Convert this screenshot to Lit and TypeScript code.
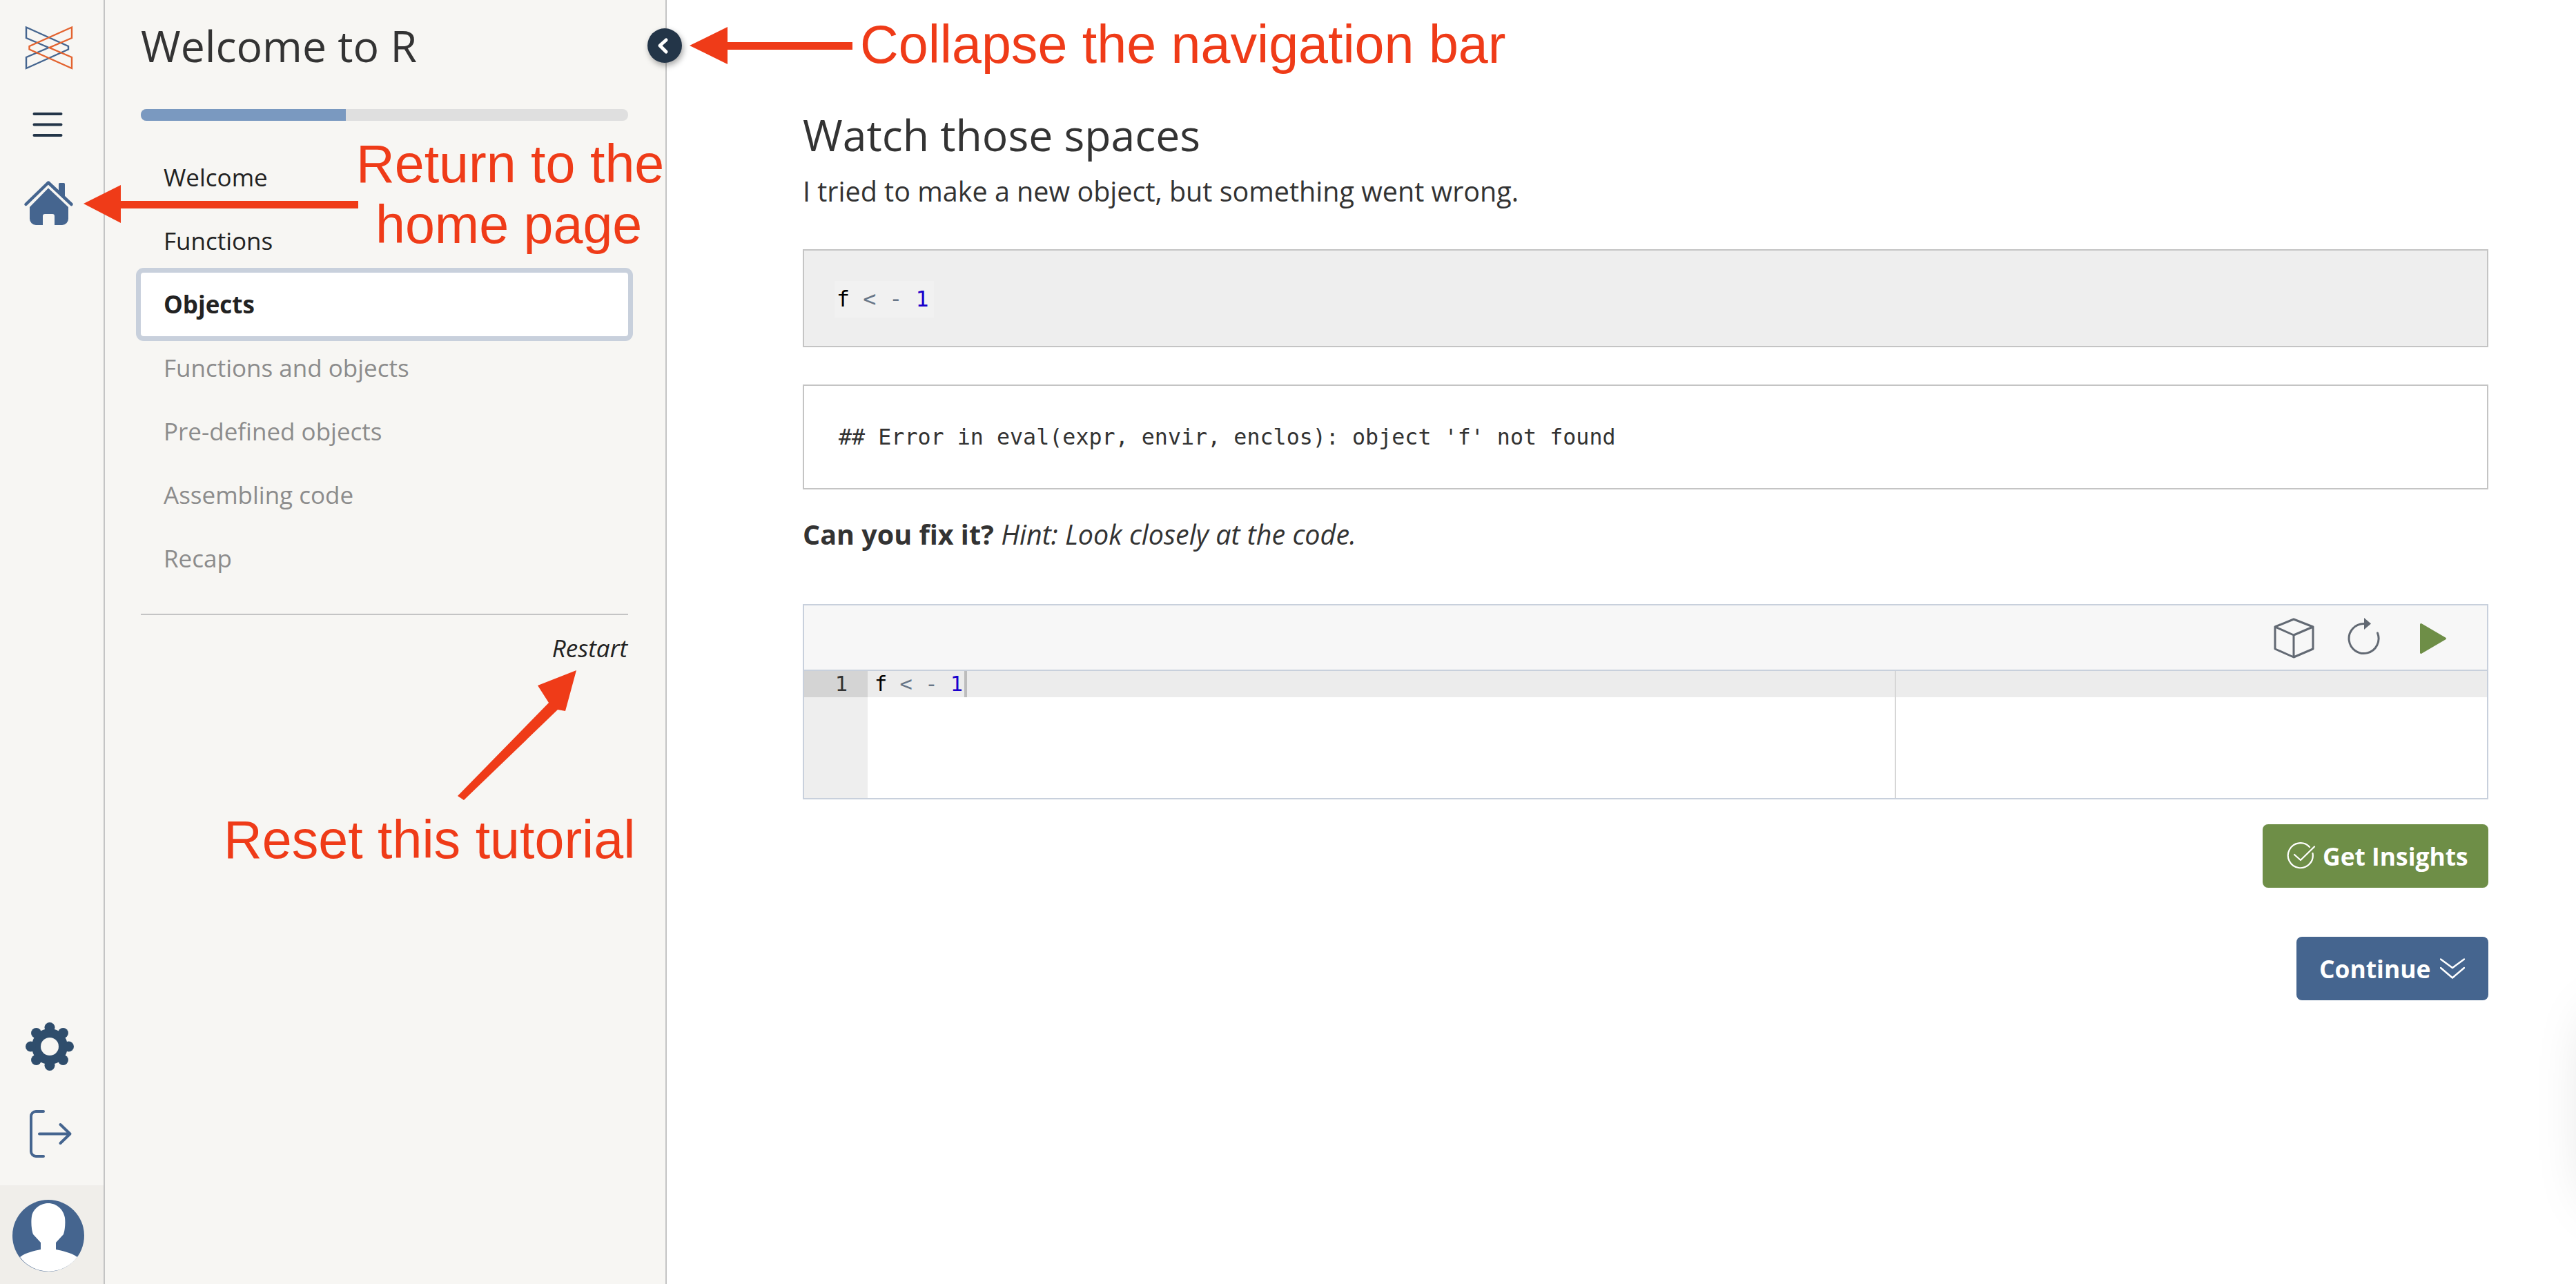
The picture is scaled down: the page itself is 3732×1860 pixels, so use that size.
import { LitElement, html, css, svg } from "lit";
import { customElement } from "lit/decorators.js";

const NAV = [
  { label: "Welcome", state: "done" },
  { label: "Functions", state: "done" },
  { label: "Objects", state: "active" },
  { label: "Functions and objects", state: "todo" },
  { label: "Pre-defined objects", state: "todo" },
  { label: "Assembling code", state: "todo" },
  { label: "Recap", state: "todo" },
];
const LOBES = [0, 45, 90, 135, 180, 225, 270, 315].map((a) => ({
  x: 72 + 27.5 * Math.cos((a * Math.PI) / 180),
  y: 1516 + 27.5 * Math.sin((a * Math.PI) / 180),
}));
function svgCircle(x: number, y: number) {
  return svg`<circle cx=${x} cy=${y} r="7.500" fill="#2f4d6c"/>`;
}

@customElement("app-root")
export class AppRoot extends LitElement {
  static styles = css`
    :host { display: block; position: relative; width: 100%; height: 100vh; overflow: hidden; background: #fff;
      font-family: "Open Sans", sans-serif; color: #333; }
    .page { display: flex; height: 100%; }
    svg { display: block; flex: none; }
    .rail { width: 150px; flex: none; display: flex; flex-direction: column; background: #f7f6f3; border-right: 2px solid #c4c4c4; }
    .logo { width: 70px; height: 64px; margin: 37px 0 0 36px; }
    .burger { width: 46px; height: 39px; margin: 60px 0 0 46px; }
    .home { width: 74px; height: 70px; margin: 60px 0 0 34px; }
    .gear { width: 76px; height: 76px; margin: auto 0 0 34px; }
    .logout { width: 66px; height: 77px; margin: 50px 0 0 40px; }
    .me { height: 143px; margin-top: 36px; background: #f0eeea; padding: 21px 0 0 18px; box-sizing: border-box; }
    .avatar { width: 104px; height: 104px; }

    .side { flex: none; padding: 0 54px 0 52px; background: #f7f6f3; border-right: 2px solid #c4c4c4; position: relative; box-sizing: content-box; width: 706px; }
    .title { margin: 0; padding-top: 24px; height: 158px; box-sizing: border-box; font-size: 62.500px; line-height: 84px; font-weight: 400; color: #333; }
    .track { height: 17px; border-radius: 8px; background: #dfdfdf; overflow: hidden; }
    .fill { height: 100%; background: #7a99c0; }
    .nav { margin-top: 36px; }
    .item { height: 92px; line-height: 92px; padding-left: 33px; font-size: 35px; color: #222; border-radius: 4px; }
    .item.todo { color: #8c8c8c; }
    .item.active { background: #fff; font-weight: 700; outline: 7px solid #c8d0dc; }
    .rule { height: 2px; background: #c4c4c4; margin-top: 34px; }
    .restart { text-align: right; font-style: italic; font-size: 35px; line-height: 48px; margin-top: 24px; color: #222; padding-right: 1px; }
    .collapse { position: absolute; left: 786px; top: 41px; width: 50px; height: 50px; border-radius: 50%; background: #233548;
      box-shadow: 2px 4px 8px rgba(0,0,0,.35); }

    .main { flex: 1; min-width: 0; padding: 150px 127px 0 197px; }
    h2 { margin: 0; font-size: 62.500px; font-weight: 400; line-height: 90px; color: #333; }
    .text { margin: 7px 0 0; font-size: 39.500px; line-height: 60px; }
    .code { box-sizing: border-box; border: 2px solid #c4c4c4; font-family: "DejaVu Sans Mono", monospace; font-size: 31.700px; display: flex; align-items: center; }
    .source { height: 142px; margin-top: 54px; background: #eee; padding-left: 44px; }
    .source .chip { background: #f1f1f1; padding: 0 7px 0 3px; margin-top: 2px; line-height: 53px; height: 53px; color: #000; white-space: pre; }
    .op { color: #687687; }
    .num { color: #1a00cc; }
    .output { height: 152px; margin-top: 54px; background: #fff; color: #333; padding-left: 50px; }
    .ask { margin: 35px 0 0; font-size: 39.500px; line-height: 60px; }
    .editor { position: relative; height: 283px; margin-top: 71px; box-sizing: border-box; border: 2px solid #c8d0dc; display: flex; flex-direction: column; }
    .tools { height: 93px; flex: none; display: flex; justify-content: flex-end; background: #f7f7f7; border-bottom: 2px solid #c8d0dc; padding-right: 56px; }
    .tools svg { height: 93px; }
    .cube { width: 61px; }
    .reload { width: 50px; margin-left: 45px; }
    .play { width: 44px; margin-left: 54px; }
    .body { flex: 1; display: flex; font-family: "DejaVu Sans Mono", monospace; font-size: 30.400px; line-height: 38px; }
    .gutter { width: 92px; flex: none; background: #eee; color: #333; }
    .gline { background: #d4d4d4; text-align: right; padding-right: 29px; height: 38px; }
    .lines { flex: 1; }
    .line { background: #ececec; height: 38px; padding-left: 10px; color: #000; display: flex; }
    .src { white-space: pre; }
    .cursor { width: 4px; height: 38px; background: #bdbdbd; margin-left: 2px; }
    .margin { position: absolute; left: 1580px; top: 95px; bottom: 0; width: 2px; background: #d6d6d6; }
    .actions { display: flex; flex-direction: column; align-items: flex-end; gap: 71px; margin-top: 36px; }
    .btn { height: 92px; border-radius: 8px; color: #fff; font-weight: 700; font-size: 35.400px; display: flex; align-items: center; box-sizing: border-box; }
    .insights { width: 327px; background: #6e8e47; padding-left: 35px; gap: 10px; }
    .continue { width: 278px; background: #45658f; padding-left: 33px; gap: 14px; }
    .check { width: 42px; height: 40px; }
    .chev { width: 36px; height: 30px; }

    .overlay { position: absolute; left: 0; top: 0; width: 3732px; height: 1860px; pointer-events: none; }
    .note { position: absolute; font-family: "Liberation Sans", Arial, sans-serif; font-size: 77.200px; line-height: 88px; color: #ef3b18; white-space: nowrap; }
    .n1 { left: 1246px; top: 20px; }
    .n2 { left: 516px; top: 193px; }
    .n3 { left: 544px; top: 281px; }
    .n4 { left: 324px; top: 1172px; }
    .glow { position: absolute; left: 3770px; top: 1480px; width: 200px; height: 250px; box-shadow: 0 0 90px rgba(0,0,0,.22); background: #fff; }
  `;

  render() {
    return html`
      <div class="page">
        <div class="rail">
          <svg class="logo" viewBox="36 37 70 64" fill="none" stroke-width="2.400" stroke-linejoin="miter">
            <path stroke="#45658f" d="M38 39.500 99 67v4.500L38 99V83l32.500-14L38 55z"/>
            <path stroke="#e3632f" d="M104 39.500 42.500 67v4.500L104 99V83L71.500 69 104 55z"/>
          </svg>
          <svg class="burger" viewBox="46 161 46 39" fill="none" stroke="#233548" stroke-width="4" stroke-linecap="round">
            <path d="M49.500 165H88.500M49.500 180.500H88.500M49.500 196H88.500"/>
          </svg>
          <svg class="home" viewBox="34 260 74 70">
            <path fill="none" stroke="#45658f" stroke-width="4.500" stroke-linecap="round" stroke-linejoin="round" d="M37.500 296 70 264.500 103.500 296"/>
            <path fill="#45658f" d="M85 266.500a1.500 1.500 0 0 1 1.500-1.500h6a1.500 1.500 0 0 1 1.500 1.500V286l-9-8.500z"/>
            <path fill="#45658f" d="M70 272.500 99 300v17a9 9 0 0 1-9 9H79v-13a3 3 0 0 0-3-3H65a3 3 0 0 0-3 3v13H52a9 9 0 0 1-9-9V300z"/>
          </svg>
          <svg class="gear" viewBox="34 1478 76 76">
            <circle cx="72" cy="1516" r="26" fill="#2f4d6c"/>
            ${LOBES.map((p) => svgCircle(p.x, p.y))}
            <circle cx="72" cy="1516" r="13" fill="#f7f6f3"/>
          </svg>
          <svg class="logout" viewBox="40 1604 66 77" fill="none" stroke="#45658f" stroke-width="4" stroke-linecap="round" stroke-linejoin="round">
            <path d="M63 1610H52a7 7 0 0 0-7 7v51a7 7 0 0 0 7 7h11"/>
            <path d="M57 1642.500H101M87.500 1629 101.500 1642.500 87.500 1656"/>
          </svg>
          <div class="me">
            <svg class="avatar" viewBox="0 0 104 104">
              <circle cx="52" cy="52" r="52" fill="#45658f"/>
              <path fill="#fff" d="M41 72V62L30 50C27 42 27 30 28 24 30 12 42 5 52 5 64 5 74 14 76 26 77 34 76 44 74 50L63 62V72C72 74 84 76 94 83A52 52 0 0 1 11 83C20 76 32 74 41 72Z"/>
            </svg>
          </div>
        </div>

        <div class="side">
          <h1 class="title">Welcome to R</h1>
          <div class="track"><div class="fill" style="width:${(297 / 706) * 100}%"></div></div>
          <div class="nav">
            ${NAV.map((n) => html`<div class="item ${n.state}">${n.label}</div>`)}
          </div>
          <div class="rule"></div>
          <div class="restart">Restart</div>
          <div class="collapse">
            <svg width="50" height="50" viewBox="0 0 50 50" fill="none" stroke="#fff" stroke-width="5" stroke-linecap="round" stroke-linejoin="round">
              <path d="M27 17 18 25 27 34"/>
            </svg>
          </div>
        </div>

        <div class="main">
          <h2>Watch those spaces</h2>
          <p class="text">I tried to make a new object, but something went wrong.</p>
          <div class="code source"><span class="chip">f <span class="op">&lt;</span> <span class="op">-</span> <span class="num">1</span></span></div>
          <div class="code output">## Error in eval(expr, envir, enclos): object 'f' not found</div>
          <p class="ask"><b>Can you fix it?</b> <i>Hint: Look closely at the code.</i></p>
          <div class="editor">
            <div class="tools">
              <svg class="cube" viewBox="3294 877 61 93" fill="none" stroke="#626973" stroke-width="3" stroke-linejoin="round">
                <path d="M3324 897 3352 908V940L3324 952 3297 940V908ZM3297 908 3324 920 3352 908M3324 920V952"/>
              </svg>
              <svg class="reload" viewBox="3400 877 50 93">
                <path fill="none" stroke="#626973" stroke-width="3" stroke-linecap="round" d="M3445.500 917A21.500 21.500 0 1 1 3426 903.500"/>
                <path fill="#626973" d="M3426 895 3436 903.500 3426 912Z"/>
              </svg>
              <svg class="play" viewBox="3504 877 44 93">
                <path fill="#6e8e47" stroke="#6e8e47" stroke-width="3" stroke-linejoin="round" d="M3508.500 904.500 3543.500 925 3508.500 945.500Z"/>
              </svg>
            </div>
            <div class="body">
              <div class="gutter"><div class="gline">1</div></div>
              <div class="lines">
                <div class="line"><span class="src">f <span class="op">&lt;</span> <span class="op">-</span> <span class="num">1</span></span><span class="cursor"></span></div>
              </div>
            </div>
            <div class="margin"></div>
          </div>
          <div class="actions">
            <div class="btn insights">
              <svg class="check" viewBox="3312 1222 42 40" fill="none" stroke="#fff" stroke-width="2.200" stroke-linecap="round" stroke-linejoin="round">
                <path d="M3345 1229A18 18 0 1 0 3349.500 1238"/>
                <path d="M3323 1240 3332 1248 3352 1228.500"/>
              </svg>
              <span>Get Insights</span>
            </div>
            <div class="btn continue">
              <span>Continue</span>
              <svg class="chev" viewBox="0 0 36 30" fill="none" stroke="#fff" stroke-width="2.500" stroke-linecap="round" stroke-linejoin="round">
                <path d="M1 1.500 18 14 35 1.500M1 14 18 28.500 35 14"/>
              </svg>
            </div>
          </div>
        </div>
      </div>

      <div class="glow"></div>
      <svg class="overlay" viewBox="0 0 3732 1860" fill="#ef3b18">
        <path d="M999 66 1054 39V61H1235V72H1054V93Z"/>
        <path d="M121 295 175 268V291H519V302H175V323Z"/>
        <path d="M835 971 779 993 795 1018 663 1153 672 1159 808 1028 819 1030Z"/>
      </svg>
      <div class="note n1">Collapse the navigation bar</div>
      <div class="note n2">Return to the</div>
      <div class="note n3">home page</div>
      <div class="note n4">Reset this tutorial</div>
    `;
  }
}
